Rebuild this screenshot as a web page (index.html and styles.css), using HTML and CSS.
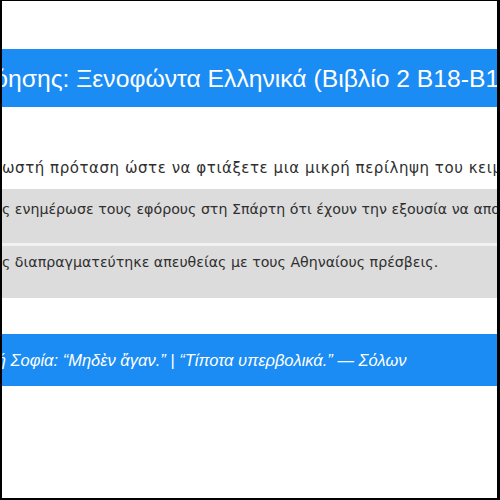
FILE: index.html
```html
<!DOCTYPE html>
<html lang="el">
<head>
<meta charset="utf-8">
<title>Ξενοφώντα Ελληνικά</title>
<link rel="stylesheet" href="styles.css">
</head>
<body>
<div class="frame">
  <header class="title-bar">
    <h1 class="line"><span class="clip w-title">Ερωτήσεις Κατανό</span><span>ησης: Ξενοφώντα Ελληνικά (Βιβλίο 2 Β18-Β19)</span></h1>
  </header>
  <main class="content">
    <p class="intro line"><span class="clip w-intro">Επιλέξτε τη σ</span><span>ωστή πρόταση ώστε να φτιάξετε μια μικρή περίληψη του κειμένου.</span></p>
    <ul class="options">
      <li class="option line"><span class="clip w-opt">Ο Λύσανδρο</span><span>ς ενημέρωσε τους εφόρους στη Σπάρτη ότι έχουν την εξουσία να αποφασίσουν.</span></li>
      <li class="option second line"><span class="clip w-opt">Ο Θηραμένη</span><span>ς διαπραγματεύτηκε απευθείας με τους Αθηναίους πρέσβεις.</span></li>
    </ul>
  </main>
  <footer class="quote-bar">
    <p class="line"><span class="clip w-quote">Αρχαία Ελληνική</span><span> Σοφία: “Μηδὲν ἄγαν.” | “Τίποτα υπερβολικά.” — Σόλων</span></p>
  </footer>
</div>
</body>
</html>
```

FILE: styles.css
```css
html, body {
  margin: 0;
  padding: 0;
  background: #000;
}

.frame {
  box-sizing: border-box;
  width: 500px;
  height: 500px;
  border-style: solid;
  border-color: #000;
  border-width: 1px 3px 2px 2px;
  background: #fff;
  overflow: hidden;
  display: flex;
  flex-direction: column;
}

.line {
  white-space: nowrap;
  overflow: hidden;
  margin: 0;
}

.clip {
  display: inline-block;
  vertical-align: bottom;
  overflow: hidden;
  direction: rtl;
  white-space: nowrap;
}

.w-title { width: 6px; }
.w-intro { width: 0; }
.w-opt { width: 0; }
.w-quote { width: 4px; }

.title-bar {
  margin-top: 48px;
  height: 58px;
  background: #1a8cf4;
  color: #fff;
  display: flex;
  align-items: center;
}

.title-bar h1 {
  font-family: "Liberation Sans", Arial, sans-serif;
  font-weight: normal;
  font-size: 24.7px;
  padding-top: 2px;
}

.content {
  font-family: "DejaVu Sans", Verdana, sans-serif;
  color: #2f2f2f;
  font-size: 14.2px;
}

.intro {
  padding: 52px 0 0 0;
  height: 30px;
  font-size: 15px;
  letter-spacing: 0.55px;
}

.options {
  list-style: none;
  margin: 0;
  padding: 0;
  display: flex;
  flex-direction: column;
  gap: 3px;
  background: #f1f1f1;
}

.option {
  background: #dcdcdc;
  height: 54px;
  box-sizing: border-box;
  padding-top: 12px;
}

.option.second {
  height: 52px;
  padding-top: 8px;
}

.quote-bar {
  margin-top: 36px;
  height: 52px;
  background: #1a8cf4;
  color: #fff;
  display: flex;
  align-items: center;
  font-family: "Liberation Sans", Arial, sans-serif;
  font-style: italic;
  font-size: 16.5px;
}
```
